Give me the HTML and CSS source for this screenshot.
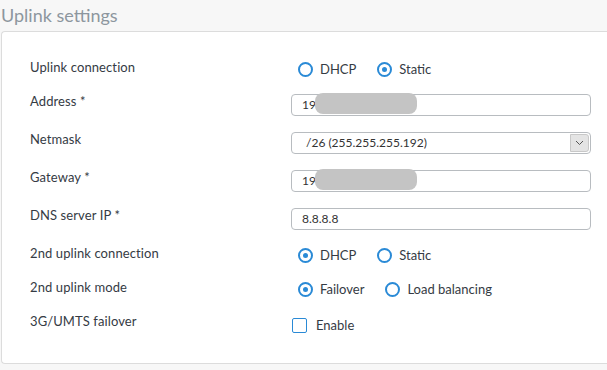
FILE: index.html
```html
<!DOCTYPE html>
<html lang="en">
    <head>
        <title>Uplink settings</title>
        <link rel="stylesheet" href="styles.css">
    </head>
    <body>
        <div id="pageTitle">Uplink settings</div>
        <div id="settingsPanel">
            <div class="settingRow radioRow">
                <span class="settingLabel">Uplink connection</span>
                <div class="optionGroup">
                    <span class="radioOption"><span class="radioMark"></span>DHCP</span>
                    <span class="radioOption"><span class="radioMark checked"></span>Static</span>
                </div>
            </div>

            <div class="settingRow">
                <span class="settingLabel">Address *</span>
                <div class="fieldWrap">
                    <div class="textField">19</div>
                    <span class="redacted"></span>
                </div>
            </div>

            <div class="settingRow">
                <span class="settingLabel">Netmask</span>
                <div class="selectField">
                    <span class="selectValue">/26 (255.255.255.192)</span>
                    <span class="selectButton">
                        <svg width="9" height="6" viewBox="0 0 9 6"><path d="M1 1 L4.5 4.5 L8 1" fill="none" stroke="#555" stroke-width="1"/></svg>
                    </span>
                </div>
            </div>

            <div class="settingRow">
                <span class="settingLabel">Gateway *</span>
                <div class="fieldWrap">
                    <div class="textField">19</div>
                    <span class="redacted"></span>
                </div>
            </div>

            <div class="settingRow">
                <span class="settingLabel">DNS server IP *</span>
                <div class="textField">8.8.8.8</div>
            </div>

            <div class="settingRow radioRow">
                <span class="settingLabel">2nd uplink connection</span>
                <div class="optionGroup">
                    <span class="radioOption"><span class="radioMark checked"></span>DHCP</span>
                    <span class="radioOption"><span class="radioMark"></span>Static</span>
                </div>
            </div>

            <div class="settingRow radioRow">
                <span class="settingLabel">2nd uplink mode</span>
                <div class="optionGroup">
                    <span class="radioOption"><span class="radioMark checked"></span>Failover</span>
                    <span class="radioOption"><span class="radioMark"></span>Load balancing</span>
                </div>
            </div>

            <div class="settingRow radioRow">
                <span class="settingLabel">3G/UMTS failover</span>
                <div class="checkOption"><span class="checkMark"></span>Enable</div>
            </div>
        </div>
    </body>
</html>
```

FILE: styles.css
```css
body{
    margin: 0;
    background-color: #f7f7f7;
    font-family: Lato, "Liberation Sans", sans-serif;
    font-size: 13px;
    color: #353b44;
}

#pageTitle{
    height: 31px;
    padding-left: 1px;
    font-size: 18px;
    line-height: 30px;
    color: #8d969e;
}

#settingsPanel{
    display: flex;
    flex-direction: column;
    gap: 16px;
    margin-left: 1px;
    padding: 28px 0 31px 28px;
    background-color: #fff;
    border: 1px solid #dcdcdc;
    border-right: none;
    border-radius: 4px 0 0 4px;
}

.settingRow{
    display: grid;
    grid-template-columns: 261px 300px;
    align-items: center;
    height: 22px;
}

.radioRow{
    height: 18px;
}

.settingLabel{
    align-self: start;
    margin-top: -1px;
    line-height: 16px;
    letter-spacing: 0.1px;
}

.optionGroup{
    display: flex;
    align-items: center;
    gap: 21px;
    padding-left: 7px;
}

.radioOption{
    display: flex;
    align-items: center;
    gap: 7px;
}

.radioMark{
    box-sizing: border-box;
    width: 15px;
    height: 15px;
    border: 2px solid #2a8ad6;
    border-radius: 50%;
    position: relative;
}

.radioMark.checked::after{
    content: "";
    position: absolute;
    left: 3px;
    top: 3px;
    width: 5px;
    height: 5px;
    border-radius: 50%;
    background-color: #2a8ad6;
}

.checkOption{
    display: flex;
    align-items: center;
    gap: 9px;
    padding-left: 1px;
    margin-top: 3px;
}

.checkMark{
    box-sizing: border-box;
    width: 15px;
    height: 15px;
    border: 1.5px solid #2a8ad6;
    border-radius: 2px;
}

.fieldWrap{
    position: relative;
}

.textField{
    box-sizing: border-box;
    height: 22px;
    padding: 0 10px;
    line-height: 20px;
    font-size: 12px;
    color: #333;
    border: 1px solid #b8bcc0;
    border-radius: 4px;
    background-color: #fff;
}

.redacted{
    position: absolute;
    left: 24px;
    top: -1px;
    width: 102px;
    height: 21px;
    border-radius: 8px;
    background-color: #c4c4c4;
}

.selectField{
    box-sizing: border-box;
    display: flex;
    justify-content: space-between;
    height: 22px;
    padding-left: 14px;
    border: 1px solid #b8bcc0;
    border-radius: 4px;
    font-size: 12px;
    line-height: 20px;
    color: #333;
}

.selectButton{
    display: flex;
    align-items: center;
    justify-content: center;
    width: 17px;
    margin: 1px;
    background-color: #e4e4e4;
    border: 1px solid #c8c8c8;
    border-radius: 0 3px 3px 0;
}
```
